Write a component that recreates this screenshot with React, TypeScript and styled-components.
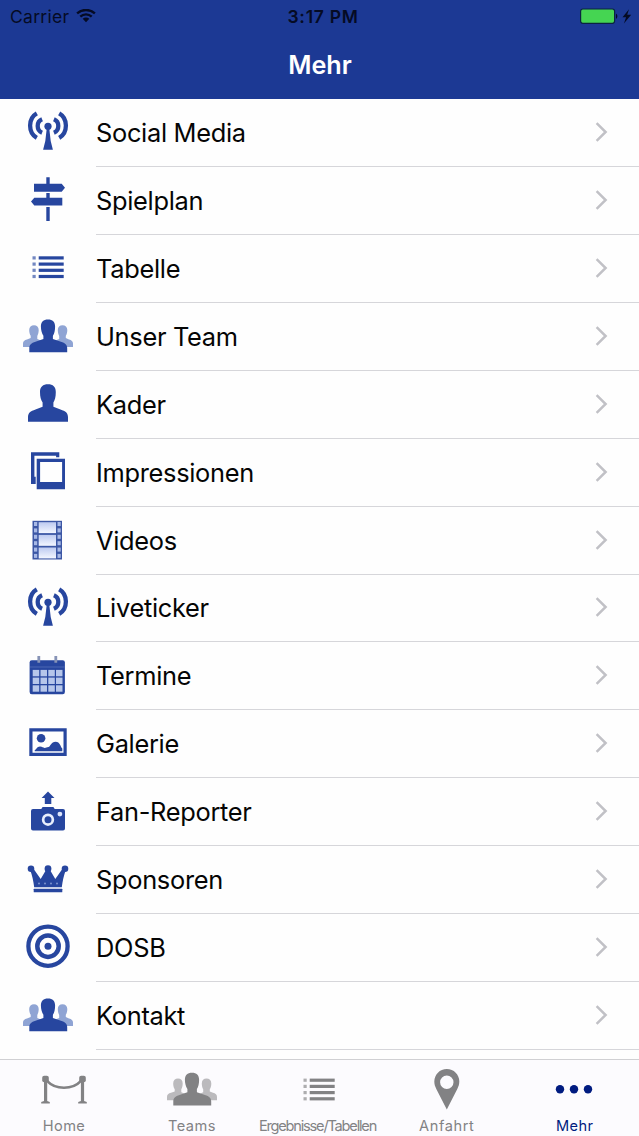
import React from "react";
import styled, { createGlobalStyle } from "styled-components";

const BLUE = "#27469f";
const GRAY = "#828284";

const GlobalStyle = createGlobalStyle`
  *, *::before, *::after { box-sizing: border-box; }
  body { margin: 0; background: #fefefe; font-family: Inter, "Liberation Sans", sans-serif; }
`;

const Screen = styled.div`
  display: flex;
  flex-direction: column;
  width: 639px;
  height: 1136px;
  overflow: hidden;
  background: #fefefe;
`;

const Header = styled.header`
  flex: none;
  height: 98.6px;
  background: #1c3994;
`;

const StatusBar = styled.div`
  display: grid;
  grid-template-columns: 1fr auto 1fr;
  align-items: center;
  height: 33px;
  padding: 0 7px 0 10px;
  font-size: 17.5px;
  line-height: 33px;
  color: #050b24;
`;

const Carrier = styled.div`
  display: flex;
  align-items: center;
  gap: 7px;
  letter-spacing: 0.3px;
`;

const Clock = styled.div`
  font-weight: 600;
  padding-left: 4px;
  letter-spacing: 0.7px;
`;

const Power = styled.div`
  display: flex;
  justify-content: flex-end;
`;

const Title = styled.h1`
  margin: 0;
  height: 65px;
  font-size: 25.2px;
  font-weight: 600;
  line-height: 65px;
  text-align: center;
  text-indent: 1px;
  color: #fff;
`;

const List = styled.ul`
  flex: 1;
  min-height: 0;
  margin: 0;
  padding: 0.8px 0 0;
  list-style: none;
  overflow: hidden;
`;

const Row = styled.li`
  display: flex;
  height: 67.88px;
`;

const RowIcon = styled.svg`
  flex: none;
  width: 96px;
  height: 68px;
`;

const RowBody = styled.div`
  flex: 1;
  display: flex;
  align-items: center;
  justify-content: space-between;
  padding-right: 31px;
  border-bottom: 1px solid #d6d6da;
`;

const Label = styled.span`
  font-size: 25.4px;
  line-height: 34px;
  padding-top: 1px;
  color: #050505;
  letter-spacing: -0.3px;
  white-space: nowrap;
`;

const Chevron = styled.svg`
  width: 13px;
  height: 20px;
  margin-bottom: 1px;
  fill: none;
  stroke: #c1c1c6;
  stroke-width: 2.5px;
`;

const TabBar = styled.nav`
  flex: none;
  display: grid;
  grid-template-columns: repeat(5, 1fr);
  height: 77px;
  border-top: 1px solid #d0d0d3;
  background: #fcfbfe;
`;

const Tab = styled.div<{ $active?: boolean }>`
  display: flex;
  flex-direction: column;
  align-items: center;
  color: ${(p) => (p.$active ? "#001b80" : GRAY)};
`;

const TabIcon = styled.svg`
  width: 128px;
  height: 56px;
  flex: none;
`;

const TabLabel = styled.span<{ $spacing: number; $trail: number }>`
  font-size: 14.6px;
  line-height: 20px;
  letter-spacing: ${(p) => p.$spacing}px;
  padding-right: ${(p) => p.$trail}px;
  white-space: nowrap;
`;

const Antenna = () => (
  <g>
    <circle cx="48" cy="27.3" r="3.6" fill={BLUE} />
    <path d="M46.8 29h2.4l1.5 13 2.2 8.8h-9.8l2.2-8.8z" fill={BLUE} />
    <g fill="none" stroke={BLUE} strokeWidth="4.3">
      <path d="M36.8 14.3C32.300 16.900 30.100 21.500 30.100 26.500S32.300 36.300 36.800 38.900" />
      <path d="M59.200 14.300C63.700 16.900 65.900 21.500 65.900 26.500S63.700 36.300 59.200 38.900" />
      <path d="M42.100 20.300C39.100 21.500 37.700 24 37.700 27S39.100 32.500 42.100 33.700" />
      <path d="M53.900 20.300C56.900 21.500 58.300 24 58.300 27S56.900 32.500 53.900 33.700" />
    </g>
  </g>
);

const Signpost = () => (
  <path
    fill={BLUE}
    d="M46.300 10.300h3.400v6.400h12l3.300 4-3.300 4H34v-8h12.300zM46.300 26.100h3.400v4.600h12.600v7.700H34.300l-3.300-3.850 3.300-3.850h12zM46.300 40.100h3.400v14h-3.400z"
  />
);

const Lines = ({ color }: { color: string }) => (
  <g fill={color}>
    {[21.3, 27.5, 33.7, 39.9].map((y) => (
      <React.Fragment key={y}>
        <rect x="32.500" y={y} width="3.200" height="3.200" opacity="0.65" />
        <rect x="38.700" y={y} width="25" height="3.200" />
      </React.Fragment>
    ))}
  </g>
);

const People = ({ color, side }: { color: string; side: string }) => (
  <g>
    <path
      fill={side}
      d="M34 22.200c2.800 0 4.700 1.700 4.700 4.900 0 2.600-.7 4.500-1.400 5.800v3l7.300 3v5H23v-3.300c0-2.500 1.500-3.500 4-4.200l3.700-1.300v-2.300c-.9-1.300-1.500-3.100-1.500-5.700 0-3.200 2-4.900 4.800-4.900z"
    />
    <path
      fill={side}
      d="M62.500 22.200c-2.800 0-4.700 1.700-4.700 4.900 0 2.600.7 4.500 1.400 5.800v3l-7.300 3v5H73v-3.300c0-2.500-1.500-3.500-4-4.200l-3.200-1.300v-2.300c.9-1.300 1.500-3.100 1.500-5.700 0-3.200-2-4.900-4.800-4.900z"
    />
    <path
      fill={color}
      d="M48 16.400c4.600 0 7.100 2.500 7.100 7.100 0 4.200-.7 6.800-2.200 9.300v3.100l8 2.900c4.300 1.400 6.300 3 6.300 6.400v4H29.300v-4c0-3.400 2-5 6.200-6.400l7.900-2.900v-3.100c-1.400-2.500-2.500-5.100-2.500-9.300 0-4.600 2.500-7.100 7.100-7.100z"
    />
  </g>
);

const Person = () => (
  <path
    fill={BLUE}
    d="M48 13.300c5 0 7.800 2.600 7.800 7.600 0 5-.9 7.900-2.400 10.500v4.300l7.100 2.800c5 1.700 7.500 3.300 7.500 7.700v4.500H28v-4.500c0-4.400 2.500-6 7.500-7.700l7.100-2.800v-4.300c-1.600-2.600-2.600-5.500-2.600-10.500 0-5 3-7.600 8-7.600z"
  />
);

const Photos = () => (
  <g fill={BLUE}>
    <path d="M31 13.300h28.300v5h-3.200v-1.600H34.400v21h1.300v7.200H31z" />
    <path d="M36.700 19.700H65V50.300H36.700zM40.100 23.100v20h22v-20z" fillRule="evenodd" />
  </g>
);

const Film = () => (
  <g>
    <defs>
      <linearGradient id="frame" x1="0" y1="0" x2="0" y2="1">
        <stop offset="0" stopColor="#bdcaf0" />
        <stop offset="1" stopColor="#f3f6ff" />
      </linearGradient>
    </defs>
    <rect x="32.500" y="13.800" width="29.500" height="38.700" fill="#3c57a5" />
    {[15.200, 27.900, 40.500].map((y) => (
      <rect key={y} x="38.700" y={y} width="17.300" height="10.900" fill="url(#frame)" />
    ))}
    {[15, 21.400, 27.800, 34.200, 40.600, 46.900].map((y) => (
      <g key={y} fill="#a8b9e6">
        <rect x="34" y={y} width="3.200" height="4" />
        <rect x="57.500" y={y} width="3.200" height="4" />
      </g>
    ))}
  </g>
);

const Calendar = () => (
  <g>
    <rect x="29.600" y="18.200" width="35.300" height="34.100" rx="2.200" fill={BLUE} />
    <path d="M30 25h34.600" stroke="#5b76bd" strokeWidth="0.700" />
    <path d="M38.800 13.900v6.800M55.800 13.900v6.800" stroke="#8793b6" strokeWidth="2.800" />
    {[27.900, 35.600, 43.300].map((y) =>
      [32.700, 40.500, 48.300, 56].map((x) => (
        <rect key={`${x}-${y}`} x={x} y={y} width="6.500" height="6.400" fill="#b6c6ea" />
      )),
    )}
  </g>
);

const Picture = () => (
  <g fill={BLUE} transform="translate(0 -0.600)">
    <path fillRule="evenodd" d="M29.300 18.900h37.400v27.700H29.300zM32.500 22.100v21.300h31V22.100z" />
    <circle cx="41.100" cy="28.900" r="4.300" />
    <path d="M34.700 41.900v-1c1.300-.2 2.300-3.700 5.300-3.700 2.400 0 3 1.300 4.600 1.300 1.500 0 2-.3 3.900-.8 2-.6 2.700-5.300 7-5.300 4.800 0 4.800 5.100 6.800 6.600v2.900z" />
  </g>
);

const Camera = () => (
  <g fill={BLUE} transform="translate(0 -0.600)">
    <path d="M48 14.100l6.500 6.400h-3.200v6.200h-6.500v-6.200h-3.200z" />
    <path d="M33 31.700h8.300l1.300-2h10.800l1.300 2H63a2 2 0 0 1 2 2V51a2 2 0 0 1-2 2H33a2 2 0 0 1-2-2V33.700a2 2 0 0 1 2-2z" />
    <circle cx="48" cy="42.300" r="4.850" stroke="#e8eefc" strokeWidth="2.700" />
    <circle cx="59.900" cy="36.700" r="2.400" fill="#dce5fb" />
  </g>
);

const Crown = () => (
  <g fill={BLUE} transform="translate(0 -0.600)">
    <circle cx="31" cy="23.300" r="3.300" />
    <circle cx="48" cy="23.300" r="3.400" />
    <circle cx="65" cy="23.300" r="3.300" />
    <path d="M30 24l3.300-.8 7.400 10.500L46.300 24h3.400l5.600 9.700 7.400-10.500 3.300.8c-2.300 6.200-3.500 12-4.200 17.800H34.200C33.500 36 32.300 30.200 30 24z" />
    <rect x="33.700" y="43.300" width="28.600" height="3.600" rx="0.500" />
    {[39, 45, 51, 57].map((x) => (
      <circle key={x} cx={x} cy="38.200" r="1" fill="#7e94cf" />
    ))}
  </g>
);

const Target = () => (
  <g fill="none" stroke={BLUE}>
    <circle cx="48" cy="32.200" r="19.600" strokeWidth="4.300" />
    <circle cx="48" cy="32.200" r="10.700" strokeWidth="4.500" />
    <circle cx="48" cy="32.200" r="3.500" fill={BLUE} stroke="none" />
  </g>
);

const BluePeople = () => <People color={BLUE} side="#8fa4d4" />;
const BlueLines = () => <Lines color={BLUE} />;

const rows: { label: string; Icon: () => React.ReactElement }[] = [
  { label: "Social Media", Icon: Antenna },
  { label: "Spielplan", Icon: Signpost },
  { label: "Tabelle", Icon: BlueLines },
  { label: "Unser Team", Icon: BluePeople },
  { label: "Kader", Icon: Person },
  { label: "Impressionen", Icon: Photos },
  { label: "Videos", Icon: Film },
  { label: "Liveticker", Icon: Antenna },
  { label: "Termine", Icon: Calendar },
  { label: "Galerie", Icon: Picture },
  { label: "Fan-Reporter", Icon: Camera },
  { label: "Sponsoren", Icon: Crown },
  { label: "DOSB", Icon: Target },
  { label: "Kontakt", Icon: BluePeople },
];

const Barrier = () => (
  <g fill={GRAY}>
    <rect x="42.200" y="15.700" width="6.600" height="6.600" rx="2" />
    <rect x="79.200" y="15.700" width="6.600" height="6.600" rx="2" />
    <path d="M44 21h3.200v20l2.600 1.100v1.400h-8.600v-1.400L44 41zM80.900 21h3.200v20l2.700 1.100v1.400h-8.600v-1.400l2.700-1.100z" />
    <path d="M47 20.800c8.500 9.200 25.500 9.200 34 0" fill="none" stroke={GRAY} strokeWidth="2.600" />
  </g>
);

const Pin = () => (
  <path
    fill={GRAY}
    fillRule="evenodd"
    d="M62.800 9c7 0 12.500 5.500 12.500 12.600 0 3-.8 5-2 7.300L62.800 49.500 52.300 28.900c-1.200-2.300-2-4.300-2-7.300C50.300 14.500 55.800 9 62.800 9zm0 6.500a6.700 6.700 0 1 0 0 13.400 6.700 6.700 0 0 0 0-13.400z"
  />
);

const More = () => (
  <g fill="#001b80">
    <circle cx="48" cy="29.300" r="4.200" />
    <circle cx="62" cy="29.300" r="4.200" />
    <circle cx="76" cy="29.300" r="4.200" />
  </g>
);

const GrayPeople = () => (
  <g transform="translate(16 -3.700)">
    <People color={GRAY} side="#bbbabd" />
  </g>
);

const GrayLines = () => (
  <g transform="translate(15 -2.700)">
    <Lines color={GRAY} />
  </g>
);

const tabs: {
  label: string;
  spacing: number;
  trail: number;
  active?: boolean;
  Icon: () => React.ReactElement;
}[] = [
  { label: "Home", spacing: 0.4, trail: 0, Icon: Barrier },
  { label: "Teams", spacing: 0.5, trail: 0, Icon: GrayPeople },
  { label: "Ergebnisse/Tabellen", spacing: -1.2, trail: 5, Icon: GrayLines },
  { label: "Anfahrt", spacing: 0.6, trail: 2.5, Icon: Pin },
  { label: "Mehr", spacing: 0.4, trail: 2.5, active: true, Icon: More },
];

export default function App() {
  return (
    <Screen>
      <GlobalStyle />
      <Header>
        <StatusBar>
          <Carrier>
            Carrier
            <svg width="20" height="15" viewBox="0 0 20 15" fill="none" stroke="#050b24" strokeWidth="2.400">
              <path d="M1.100 4.300c5-4.400 12.800-4.400 17.800 0" />
              <path d="M4.300 7.600c3.300-3 8.100-3 11.400 0" />
              <path d="M10 13.200l-3.300-3.500c1.900-1.600 4.700-1.600 6.600 0z" fill="#050b24" stroke="none" />
            </svg>
          </Carrier>
          <Clock>3:17 PM</Clock>
          <Power>
            <svg width="52" height="18" viewBox="0 0 52 18">
              <rect x="0.600" y="1" width="34" height="14.300" rx="2.200" fill="#45d552" stroke="#0b2440" strokeWidth="1.200" />
              <path d="M36 5.700c1.800.6 1.800 4.400 0 5z" fill="#050b24" />
              <path d="M49 1.200l-6.500 8h3.600l-2.200 6.300 7.300-8.700h-4z" fill="#050b24" />
            </svg>
          </Power>
        </StatusBar>
        <Title>Mehr</Title>
      </Header>
      <List>
        {rows.map(({ label, Icon }) => (
          <Row key={label}>
            <RowIcon viewBox="0 0 96 68">
              <Icon />
            </RowIcon>
            <RowBody>
              <Label>{label}</Label>
              <Chevron viewBox="0 0 13 20">
                <path d="M1.600 1.200L10.600 10l-9 8.800" />
              </Chevron>
            </RowBody>
          </Row>
        ))}
      </List>
      <TabBar>
        {tabs.map(({ label, spacing, trail, active, Icon }) => (
          <Tab key={label} $active={active}>
            <TabIcon viewBox="0 0 128 56">
              <Icon />
            </TabIcon>
            <TabLabel $spacing={spacing} $trail={trail}>
              {label}
            </TabLabel>
          </Tab>
        ))}
      </TabBar>
    </Screen>
  );
}
